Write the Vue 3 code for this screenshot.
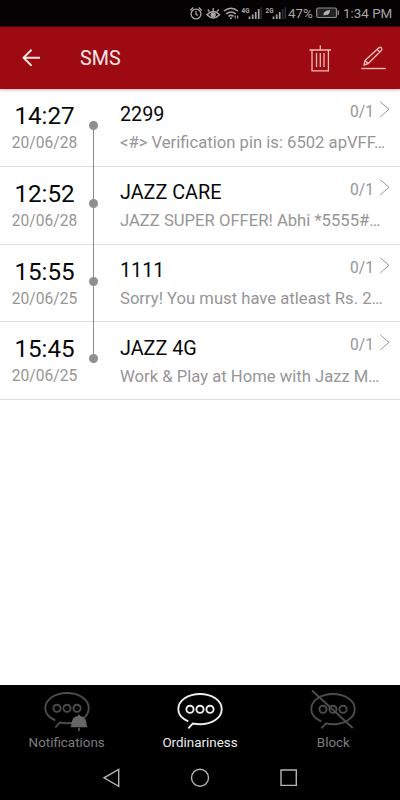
<script setup>
import { ref } from 'vue'

const messages = ref([
  { id: 1, time: '14:27', date: '20/06/28', sender: '2299', text: '<#> Verification pin is: 6502 apVFF…', count: '0/1' },
  { id: 2, time: '12:52', date: '20/06/28', sender: 'JAZZ CARE', text: 'JAZZ SUPER OFFER! Abhi *5555#…', count: '0/1' },
  { id: 3, time: '15:55', date: '20/06/25', sender: '1111', text: 'Sorry! You must have atleast Rs. 2…', count: '0/1' },
  { id: 4, time: '15:45', date: '20/06/25', sender: 'JAZZ 4G', text: 'Work & Play at Home with Jazz M…', count: '0/1' }
])

const tabs = [
  { key: 'notifications', label: 'Notifications' },
  { key: 'ordinary', label: 'Ordinariness' },
  { key: 'block', label: 'Block' }
]
const activeTab = ref('ordinary')
</script>

<template>
  <div class="screen">
    <div class="status">
      <svg class="statusIcons" width="100" height="26" viewBox="188 0 100 26" fill="none" stroke="#a6a6a6" stroke-width="1.3">
        <!-- alarm -->
        <circle cx="196" cy="14" r="4.9" />
        <path d="M196 11v3.2l2 1.3M190.3 10.5l3-3M201.700 10.5l-3-3" />
        <!-- eye -->
        <path d="M207 14.8q6.200-6.500 12.500 0q-6.300 6.500-12.500 0z" stroke-width="1.500" />
        <circle cx="213.200" cy="14.800" r="2" fill="#a6a6a6" />
        <path d="M213.200 11V8M209.300 11.500l-1.500-2M217.100 11.500l1.500-2" />
        <!-- wifi -->
        <path d="M224 11q7-5.600 14 0M226.300 13.800q4.700-3.700 9.400 0M228.500 16.300q2.500-1.800 5 0" stroke-width="1.600" />
        <circle cx="231" cy="18.200" r="1" fill="#a6a6a6" stroke="none" />
        <path d="M235.200 18.500v-3M237.600 15.500v3" stroke-width="1.100" />
        <!-- signal bars -->
        <path d="M249.500 19v-2.500M252.700 19v-4.500M255.700 19v-7M258.700 19V9" stroke-width="1.700" />
        <path d="M261.300 19V7.500" stroke="#333" stroke-width="1.500" />
        <path d="M273.500 19v-2.500M276.700 19v-4.500M279.700 19v-7" stroke-width="1.700" />
        <path d="M282.700 19V9M285.300 19V7.500" stroke="#333" stroke-width="1.500" />
        <g class="net" fill="#a6a6a6" stroke="none">
          <text x="241.500" y="12.500" textLength="8" lengthAdjust="spacingAndGlyphs">4G</text>
          <text x="265.500" y="12.500" textLength="8" lengthAdjust="spacingAndGlyphs">2G</text>
        </g>
      </svg>
      <span class="percent">47%</span>
      <svg class="battery" width="24" height="12" viewBox="0 0 24 12">
        <rect x=".7" y="1" width="19.800" height="9.500" rx="1.500" fill="#222" stroke="#8d8d8d" stroke-width="1.200" />
        <path d="M22.300 3.500v4.500" stroke="#8d8d8d" stroke-width="1.300" />
        <path d="M7.500 8.500q-.5-5 6.500-5.500q0 5.500-5 5z" fill="#b5b5b5" />
      </svg>
      <span class="clock">1:34 PM</span>
    </div>

    <div class="header">
      <svg class="back" width="20" height="20" viewBox="0 0 20 20" fill="none" stroke="#fbe3e0" stroke-width="1.900">
        <path d="M19 9.800H2.500M10.600 1.800L2.500 9.800l8.100 8" />
      </svg>
      <h1>SMS</h1>
      <svg class="trash" width="24" height="28" viewBox="0 0 24 28" fill="none" stroke="#f0bab5" stroke-width="1.300">
        <path d="M1.500 6h21.500M12.300 1.200v4.800M4 6v20.800h16.400V6M8.500 9v14M12.300 9v14M16 9v14" />
      </svg>
      <svg class="pencil" width="26" height="24" viewBox="0 0 26 24" fill="none" stroke="#f0bab5" stroke-width="1.400" stroke-linejoin="round">
        <path d="M3 19.200l1-4.600L17.900 1.800q1.400-1 2.500.1q1.100 1.200-.1 2.500L7.200 17.500zM4 14.600L7.200 17.500M16.200 3.400l2.600 2.600" />
        <path d="M.3 22.500h24.500" />
      </svg>
    </div>

    <div class="list">
      <div v-for="item in messages" :key="item.id" class="row">
        <div class="when">
          <p class="time">{{ item.time }}</p>
          <p class="date">{{ item.date }}</p>
        </div>
        <div class="timeline"><span class="dot"></span></div>
        <div class="body">
          <div class="top">
            <p class="sender">{{ item.sender }}</p>
            <span class="count">{{ item.count }}</span>
            <svg class="chevron" width="10" height="17" viewBox="0 0 10 17" fill="none" stroke="#969696" stroke-width="1">
              <path d="M.3.800L9 8.300L.3 15.800" />
            </svg>
          </div>
          <p class="text">{{ item.text }}</p>
        </div>
      </div>
    </div>

    <div class="footer">
      <div class="tabs">
        <div
          v-for="tab in tabs"
          :key="tab.key"
          class="tab"
          :class="[tab.key, { active: tab.key === activeTab }]"
          @click="activeTab = tab.key"
        >
          <svg width="48" height="42" viewBox="0 0 48 42" fill="none" stroke="currentColor" stroke-width="1.900">
            <path d="M12.300 30.300C5.500 27.300 2.300 23.300 2.300 18.200C2.300 9.500 12 3 24 3S45.700 9.500 45.700 18.200S36 33.300 24 33.300Q20 33.300 16.800 32.500L12.300 37.300" />
            <circle cx="14" cy="18.300" r="3.600" />
            <circle cx="24" cy="18.300" r="3.600" />
            <circle cx="34" cy="18.300" r="3.600" />
            <g v-if="tab.key === 'notifications'" stroke="none">
              <path d="M27.300 37.300q1.200-1 1.200-4q.5-6.300 6.300-7.300q.2-1.500 1.200-1.500t1.200 1.500q5.800 1 6.300 7.300q0 3 1.200 4z" fill="#666" />
              <path d="M35 37.800h2v3.200h-2z" fill="#4a4a4a" />
            </g>
            <path v-if="tab.key === 'block'" d="M3-.5L43.700 37" />
          </svg>
          <span>{{ tab.label }}</span>
        </div>
      </div>
      <div class="nav">
        <svg width="20" height="20" viewBox="0 0 20 20"><path d="M17.700 1.500v16.800L3 9.800z" /></svg>
        <svg width="20" height="20" viewBox="0 0 20 20"><circle cx="10" cy="9.800" r="8.500" /></svg>
        <svg width="20" height="20" viewBox="0 0 20 20"><path d="M2 2h15.300v15.400H2z" /></svg>
      </div>
    </div>
  </div>
</template>

<style>
body {
  margin: 0;
  background-color: #fff;
}
</style>

<style scoped>
* {
  margin: 0;
  padding: 0;
  box-sizing: border-box;
}

.screen {
  display: flex;
  flex-direction: column;
  width: 400px;
  height: 800px;
  overflow: hidden;
  background-color: #fff;
  font-family: Roboto, sans-serif;
}

svg {
  display: block;
  flex-shrink: 0;
  overflow: visible;
}

.status {
  display: flex;
  align-items: center;
  height: 27px;
  padding-left: 188px;
  background-color: #050203;
  border-bottom: 1px solid #4d0509;
  color: #a6a6a6;
  white-space: nowrap;
}

.net {
  font-size: 7px;
  font-weight: 700;
}

.percent {
  width: 28px;
  font-size: 13.4px;
  line-height: 26px;
  padding-top: 1px;
}

.battery {
  width: 24px;
}

.clock {
  margin-left: 3px;
  font-size: 13.4px;
  line-height: 26px;
  padding-top: 1px;
}

.header {
  position: relative;
  display: flex;
  align-items: center;
  height: 62px;
  flex-shrink: 0;
  padding-left: 21px;
  background-color: #9d0a11;
  box-shadow: 0 1px 3px rgba(80, 0, 0, 0.3);
}

.header h1 {
  width: 189px;
  margin-left: 39px;
  padding-top: 1px;
  font-size: 19.7px;
  font-weight: 400;
  line-height: 24px;
  color: #fbe9e7;
}

.trash {
  margin-left: 39px;
}

.pencil {
  margin-left: 29px;
}

.list {
  flex: 1;
}

.row {
  display: flex;
  height: 77.8px;
  border-bottom: 1px solid #dedede;
}

.when {
  width: 89px;
  padding-top: 12px;
  text-align: center;
  white-space: nowrap;
}

.time {
  font-size: 24.2px;
  line-height: 30px;
  color: #080808;
}

.date {
  padding-top: 1px;
  font-size: 15.6px;
  line-height: 22px;
  color: #969696;
}

/* grey line running through the dots */
.timeline {
  display: flex;
  justify-content: center;
  width: 9px;
  height: 78px;
  padding-top: 32px;
  background: linear-gradient(#8c8c8c, #8c8c8c) center / 1px 100% no-repeat;
}

.row:first-child .timeline {
  background-size: 1px 42px;
  background-position: center bottom;
}

.row:last-child .timeline {
  background-size: 1px 36px;
  background-position: center top;
}

.dot {
  width: 9px;
  height: 9px;
  border-radius: 50%;
  background-color: #8f8f8f;
}

.body {
  flex: 1;
  padding: 12px 10px 0 22px;
  min-width: 0;
}

.top {
  display: flex;
  height: 28px;
}

.sender {
  flex: 1;
  padding-top: 0.4px;
  font-size: 19.8px;
  line-height: 28px;
  color: #080808;
}

.count {
  font-size: 15.6px;
  line-height: 22px;
  color: #969696;
}

.chevron {
  margin-left: 6px;
}

.text {
  padding-top: 2.4px;
  font-size: 16.65px;
  line-height: 24px;
  color: #969696;
  white-space: nowrap;
}

.footer {
  height: 115px;
  background-color: #000;
}

.tabs {
  display: flex;
  height: 70px;
}

.tab {
  display: flex;
  flex: 1;
  flex-direction: column;
  align-items: center;
  padding-top: 6px;
  color: #4c4c4c;
  cursor: pointer;
}

.tab.notifications {
  padding-top: 5px;
}

.tab.notifications span {
  padding-top: 1px;
}

.tab span {
  font-size: 13.4px;
  line-height: 20px;
  color: #7c7c7c;
}

.tab.active,
.tab.active span {
  color: #ececec;
}

.nav {
  display: flex;
  justify-content: center;
  gap: 69px;
  padding-top: 13px;
  fill: none;
  stroke: #b4b4b4;
  stroke-width: 1.4;
}
</style>
